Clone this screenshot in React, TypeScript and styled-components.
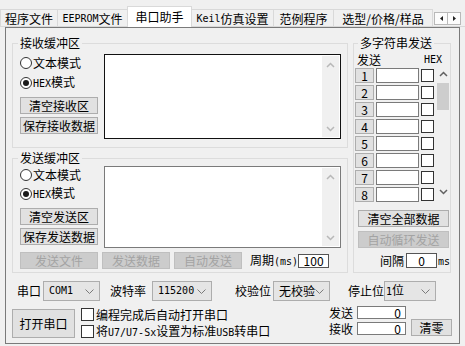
import React from "react";
import styled, { createGlobalStyle } from "styled-components";

const GlobalStyle = createGlobalStyle`
  html, body { margin: 0; padding: 0; background: #f0f0f0; }
  *, *::before, *::after { box-sizing: border-box; }
`;

const CJK = `"Noto Sans CJK SC", "Noto Sans", sans-serif`;

const Window = styled.div`
  width: 465px;
  height: 346px;
  overflow: hidden;
  background: #f0f0f0;
  font-family: ${CJK};
  font-size: 12px;
  line-height: 14px;
  color: #000;
`;

const Mono = styled.span`
  font-family: "DejaVu Sans Mono", monospace;
  font-size: 10px;
`;

/* ---------- tabs ---------- */
const TabBar = styled.div`
  display: flex;
  align-items: flex-end;
  height: 27px;
  border-bottom: 1px solid #d9d9d9;
`;

const Tab = styled.div<{ $w: number; $active?: boolean }>`
  flex: none;
  width: ${(p) => p.$w}px;
  height: ${(p) => (p.$active ? 21 : 17)}px;
  margin: 0 -1px ${(p) => (p.$active ? -1 : 0)}px 0;
  padding-top: ${(p) => (p.$active ? 0 : 2)}px;
  display: flex;
  align-items: center;
  justify-content: center;
  border: 1px solid #d9d9d9;
  border-bottom: none;
  background: ${(p) => (p.$active ? "#ffffff" : "#f0f0f0")};
  position: relative;
  z-index: ${(p) => (p.$active ? 1 : 0)};
  white-space: nowrap;
`;

const TabScroll = styled.div`
  display: flex;
  margin: 0 0 1px 2px;
`;

const TabScrollBtn = styled.div`
  width: 14px;
  height: 13px;
  border: 1px solid #b9b9b9;
  background: #fcfcfc;
  display: flex;
  align-items: center;
  justify-content: center;
  & + & { margin-left: -1px; }
`;

/* ---------- frame ---------- */
const Frame = styled.div`
  width: 455px;
  height: 317px;
  margin-left: 5px;
  border: 1px solid #7a7a7a;
  display: flex;
  flex-direction: column;
`;

const Upper = styled.div`
  display: flex;
  align-items: flex-start;
  padding: 8px 0 0 6px;
`;

const Column = styled.div`
  display: flex;
  flex-direction: column;
  gap: 3px;
`;

const Group = styled.fieldset<{ $w: number; $h: number; $pad: string; $ml?: number }>`
  flex: none;
  margin: 0 0 0 ${(p) => p.$ml ?? 0}px;
  min-width: 0;
  width: ${(p) => p.$w}px;
  height: ${(p) => p.$h}px;
  padding: ${(p) => p.$pad};
  border: 1px solid #dcdcdc;
`;

const GroupTitle = styled.legend<{ $ml: number }>`
  margin-left: ${(p) => p.$ml}px;
  padding: 0 2px;
  line-height: 14px;
  font-size: 12px;
`;

const BufferBody = styled.div`
  display: flex;
  gap: 6px;
`;

const Controls = styled.div`
  width: 78px;
  display: flex;
  flex-direction: column;
`;

const RadioList = styled.div<{ $gap: number }>`
  display: flex;
  flex-direction: column;
  gap: ${(p) => p.$gap}px;
`;

const RadioRow = styled.label`
  display: flex;
  align-items: center;
  height: 18px;
  gap: 1px;
  white-space: nowrap;
`;

const RadioMark = styled.span<{ $on?: boolean }>`
  flex: none;
  width: 12px;
  height: 12px;
  border-radius: 50%;
  border: 1px solid #333;
  background: #fff;
  display: flex;
  align-items: center;
  justify-content: center;
  &::after {
    content: "";
    width: 6px;
    height: 6px;
    border-radius: 50%;
    background: ${(p) => (p.$on ? "#1a1a1a" : "transparent")};
  }
`;

const ButtonStack = styled.div`
  display: flex;
  flex-direction: column;
  gap: 3px;
  margin-top: 5px;
`;

const Btn = styled.button<{ $w: number; $h?: number; $ml?: number; $mt?: number; $off?: boolean }>`
  flex: none;
  width: ${(p) => p.$w}px;
  height: ${(p) => p.$h ?? 17}px;
  margin: ${(p) => p.$mt ?? 0}px 0 0 ${(p) => p.$ml ?? 0}px;
  padding: 0;
  display: flex;
  align-items: center;
  justify-content: center;
  font: inherit;
  line-height: 14px;
  background: ${(p) => (p.$off ? "#cccccc" : "#e1e1e1")};
  border: 1px solid ${(p) => (p.$off ? "#bfbfbf" : "#adadad")};
  color: ${(p) => (p.$off ? "#a3a3a3" : "#000")};
  white-space: nowrap;
`;

const TextBox = styled.div<{ $h: number; $dark?: boolean }>`
  flex: none;
  width: 237px;
  height: ${(p) => p.$h}px;
  background: #fff;
  border: 1px solid ${(p) => (p.$dark ? "#111" : "#7a7a7a")};
  padding: 1px;
  display: flex;
  justify-content: flex-end;
`;

const VScroll = styled.div`
  width: 17px;
  height: 100%;
  background: #f0f0f0;
  display: flex;
  flex-direction: column;
  justify-content: space-between;
  align-items: center;
  padding: 6px 0 5px;
  svg { display: block; }
`;

const SendActions = styled.div`
  display: flex;
  align-items: center;
  height: 17px;
  margin-top: 4px;
`;

const InlineLabel = styled.span<{ $ml?: number }>`
  flex: none;
  margin-left: ${(p) => p.$ml ?? 0}px;
  white-space: nowrap;
`;

const SmallInput = styled.div<{ $w: number; $h: number; $ml?: number; $align?: string; $border?: string }>`
  flex: none;
  width: ${(p) => p.$w}px;
  height: ${(p) => p.$h}px;
  margin-left: ${(p) => p.$ml ?? 0}px;
  background: #fff;
  border: 1px solid ${(p) => p.$border ?? "#7a7a7a"};
  display: flex;
  align-items: center;
  justify-content: ${(p) => p.$align ?? "center"};
  padding: 0 4px;
  line-height: 12px;
`;

/* ---------- multi string ---------- */
const MultiHeader = styled.div`
  display: flex;
  align-items: flex-end;
  height: 18px;
  padding-bottom: 2px;
  line-height: 13px;
`;

const MultiBody = styled.div`
  display: flex;
  gap: 2px;
`;

const RowList = styled.div`
  display: flex;
  flex-direction: column;
  gap: 2px;
`;

const StrRow = styled.div`
  display: flex;
  align-items: center;
  gap: 2px;
  height: 15px;
`;

const NumBtn = styled.button`
  flex: none;
  width: 19px;
  height: 15px;
  padding: 0;
  font: inherit;
  line-height: 12px;
  background: #e1e1e1;
  border: 1px solid #adadad;
  display: flex;
  align-items: center;
  justify-content: center;
`;

const StrField = styled.div`
  flex: none;
  width: 43px;
  height: 15px;
  background: #fff;
  border: 1px solid #7a7a7a;
`;

const Check = styled.span`
  flex: none;
  width: 13px;
  height: 13px;
  background: #fff;
  border: 1px solid #333;
`;

const MultiScroll = styled.div`
  width: 14px;
  height: 134px;
  display: flex;
  flex-direction: column;
  align-items: center;
  svg { display: block; }
`;

const ScrollArrow = styled.div<{ $mt?: number; $mb?: number }>`
  margin-top: ${(p) => p.$mt ?? 0}px;
  margin-bottom: ${(p) => p.$mb ?? 0}px;
`;

const Thumb = styled.div`
  width: 12px;
  height: 27px;
  margin-top: 6px;
  background: #cdcdcd;
`;

const Spacer = styled.div<{ $w?: number }>`
  flex: ${(p) => (p.$w ? `0 0 ${p.$w}px` : "1")};
`;

const IntervalRow = styled.div`
  display: flex;
  align-items: center;
  height: 15px;
  margin-top: 5px;
`;

/* ---------- lower ---------- */
const Lower = styled.div`
  display: flex;
  flex-direction: column;
  padding-top: 8px;
`;

const SettingsRow = styled.div`
  display: flex;
  align-items: center;
  height: 20px;
`;

const Combo = styled.div<{ $w: number; $ml: number; $pl?: number }>`
  flex: none;
  width: ${(p) => p.$w}px;
  height: 20px;
  margin-left: ${(p) => p.$ml}px;
  padding: 0 5px 0 ${(p) => p.$pl ?? 5}px;
  background: #e5e5e5;
  border: 1px solid #adadad;
  display: flex;
  align-items: center;
  justify-content: space-between;
  white-space: nowrap;
  svg { display: block; }
`;

const ActionRow = styled.div`
  display: flex;
  align-items: flex-start;
  height: 34px;
  margin-top: 5px;
`;

const CheckList = styled.div`
  display: flex;
  flex-direction: column;
  margin-left: 6px;
`;

const CheckRow = styled.label`
  display: flex;
  align-items: center;
  gap: 2px;
  height: 17px;
  white-space: nowrap;
`;

const Counters = styled.div`
  margin-left: auto;
  display: flex;
  flex-direction: column;
  gap: 3px;
`;

const CounterRow = styled.div`
  display: flex;
  align-items: center;
  gap: 3px;
  height: 13px;
  line-height: 13px;
`;

const Chevron = ({ up, color }: { up?: boolean; color: string }) => (
  <svg width="9" height="6" viewBox="0 0 9 6">
    <polyline
      points={up ? "1,5 4.5,1.5 8,5" : "1,1 4.5,4.5 8,1"}
      fill="none"
      stroke={color}
      strokeWidth="1.5"
    />
  </svg>
);

const ComboArrow = () => (
  <svg width="9" height="5" viewBox="0 0 9 5">
    <polyline points="0.5,0.5 4.5,4.5 8.5,0.5" fill="none" stroke="#7a7a7a" strokeWidth="1" />
  </svg>
);

const Tri = ({ right }: { right?: boolean }) => (
  <svg width="3" height="5" viewBox="0 0 3 5" style={{ display: "block" }}>
    <polygon points={right ? "0,0 3,2.5 0,5" : "3,0 0,2.5 3,5"} fill="#222" />
  </svg>
);

function Buffer({
  title,
  mode,
  clear,
  save,
  h,
  boxH,
  pad,
  radioGap,
  dark,
  children,
}: {
  title: string;
  mode: string;
  clear: string;
  save: string;
  h: number;
  boxH: number;
  pad: string;
  radioGap: number;
  dark?: boolean;
  children?: React.ReactNode;
}) {
  return (
    <Group $w={336} $h={h} $pad={pad}>
      <GroupTitle $ml={-2}>{title}</GroupTitle>
      <BufferBody>
        <Controls>
          <RadioList $gap={radioGap}>
            <RadioRow>
              <RadioMark $on={mode === "text"} />
              文本模式
            </RadioRow>
            <RadioRow>
              <RadioMark $on={mode === "hex"} />
              <span>
                <Mono>HEX</Mono>模式
              </span>
            </RadioRow>
          </RadioList>
          <ButtonStack>
            <Btn $w={78}>{clear}</Btn>
            <Btn $w={78}>{save}</Btn>
          </ButtonStack>
        </Controls>
        <TextBox $h={boxH} $dark={dark}>
          <VScroll>
            <Chevron up color="#b8b8b8" />
            <Chevron color="#b8b8b8" />
          </VScroll>
        </TextBox>
      </BufferBody>
      {children}
    </Group>
  );
}

export default function App() {
  return (
    <Window>
      <GlobalStyle />
      <TabBar>
        <Tab $w={58}>程序文件</Tab>
        <Tab $w={71}>
          <Mono>EEPROM</Mono>文件
        </Tab>
        <Tab $w={65} $active>
          串口助手
        </Tab>
        <Tab $w={83}>
          <Mono>Keil</Mono>仿真设置
        </Tab>
        <Tab $w={61}>范例程序</Tab>
        <Tab $w={100}>选型/价格/样品</Tab>
        <TabScroll>
          <TabScrollBtn>
            <Tri />
          </TabScrollBtn>
          <TabScrollBtn>
            <Tri right />
          </TabScrollBtn>
        </TabScroll>
      </TabBar>

      <Frame>
        <Upper>
          <Column>
            <Buffer
              title="接收缓冲区"
              mode="hex"
              clear="清空接收区"
              save="保存接收数据"
              h={112}
              boxH={85}
              pad="4px 6px 0 7px"
              radioGap={2}
              dark
            />
            <Buffer
              title="发送缓冲区"
              mode="hex"
              clear="清空发送区"
              save="保存发送数据"
              h={122}
              boxH={82}
              pad="1px 6px 0 7px"
              radioGap={1}
            >
              <SendActions>
                <Btn $w={78} $off>
                  发送文件
                </Btn>
                <Btn $w={68} $ml={4} $off>
                  发送数据
                </Btn>
                <Btn $w={68} $ml={4} $off>
                  自动发送
                </Btn>
                <InlineLabel $ml={8}>
                  周期<Mono>(ms)</Mono>
                </InlineLabel>
                <SmallInput $w={31} $h={14} $border="#555">
                  100
                </SmallInput>
              </SendActions>
            </Buffer>
          </Column>

          <Group $w={98} $h={237} $pad="0 0 0 1px" $ml={5}>
            <GroupTitle $ml={3}>多字符串发送</GroupTitle>
            <MultiHeader>
              <InlineLabel $ml={2}>发送</InlineLabel>
              <InlineLabel $ml={43}>
                <Mono>HEX</Mono>
              </InlineLabel>
            </MultiHeader>
            <MultiBody>
              <RowList>
                {[1, 2, 3, 4, 5, 6, 7, 8].map((n) => (
                  <StrRow key={n}>
                    <NumBtn>{n}</NumBtn>
                    <StrField />
                    <Check />
                  </StrRow>
                ))}
              </RowList>
              <MultiScroll>
                <ScrollArrow $mt={3}>
                  <Chevron up color="#606060" />
                </ScrollArrow>
                <Thumb />
                <Spacer />
                <ScrollArrow $mb={7}>
                  <Chevron color="#606060" />
                </ScrollArrow>
              </MultiScroll>
            </MultiBody>
            <Btn $w={91} $ml={3} $mt={8}>
              清空全部数据
            </Btn>
            <Btn $w={91} $ml={3} $mt={4} $off>
              自动循环发送
            </Btn>
            <IntervalRow>
              <InlineLabel $ml={25}>间隔</InlineLabel>
              <SmallInput $w={31} $h={15} $ml={2} $border="#555">
                0
              </SmallInput>
              <InlineLabel $ml={1}>
                <Mono>ms</Mono>
              </InlineLabel>
            </IntervalRow>
          </Group>
        </Upper>

        <Lower>
          <SettingsRow>
            <InlineLabel $ml={11}>串口</InlineLabel>
            <Combo $w={57} $ml={2}>
              <Mono>COM1</Mono>
              <ComboArrow />
            </Combo>
            <InlineLabel $ml={10}>波特率</InlineLabel>
            <Combo $w={60} $ml={6}>
              <Mono>115200</Mono>
              <ComboArrow />
            </Combo>
            <InlineLabel $ml={23}>校验位</InlineLabel>
            <Combo $w={57} $ml={2}>
              <span>无校验</span>
              <ComboArrow />
            </Combo>
            <InlineLabel $ml={18}>停止位</InlineLabel>
            <Combo $w={52} $ml={0} $pl={1}>
              <span>
                <Mono>1</Mono>位
              </span>
              <ComboArrow />
            </Combo>
          </SettingsRow>

          <ActionRow>
            <Btn $w={63} $h={29} $ml={6} $mt={3}>
              打开串口
            </Btn>
            <CheckList>
              <CheckRow>
                <Check />
                编程完成后自动打开串口
              </CheckRow>
              <CheckRow>
                <Check />
                <span>
                  将<Mono>U7/U7-Sx</Mono>设置为标准<Mono>USB</Mono>转串口
                </span>
              </CheckRow>
            </CheckList>
            <Counters>
              <CounterRow>
                发送
                <SmallInput $w={49} $h={13} $ml={1} $align="flex-end">
                  0
                </SmallInput>
              </CounterRow>
              <CounterRow>
                接收
                <SmallInput $w={49} $h={13} $ml={1} $align="flex-end">
                  0
                </SmallInput>
              </CounterRow>
            </Counters>
            <Btn $w={41} $ml={5} $mt={13}>
              清零
            </Btn>
            <Spacer $w={7} />
          </ActionRow>
        </Lower>
      </Frame>
    </Window>
  );
}
